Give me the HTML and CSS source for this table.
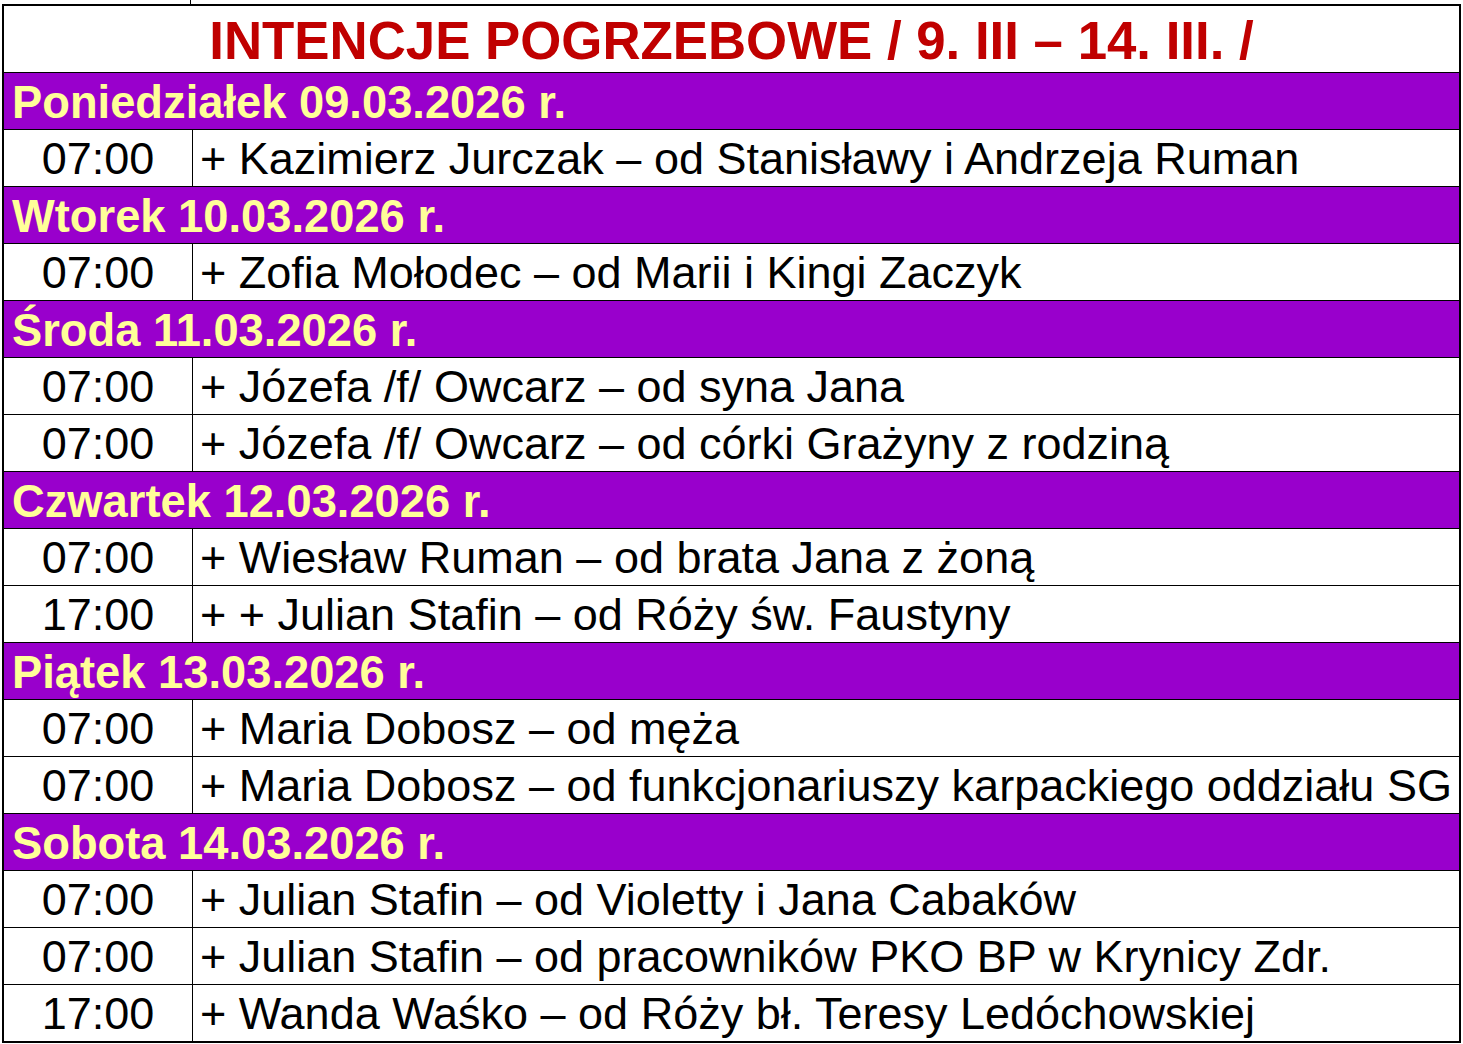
FILE: index.html
```html
<!DOCTYPE html>
<html lang="pl">
<head>
<meta charset="utf-8">
<title>Intencje pogrzebowe</title>
<link rel="stylesheet" href="styles.css">
</head>
<body>
<div class="page">
  <div class="cut-row"><div class="cut-time"></div><div class="cut-text"></div></div>
  <div class="sheet">
    <div class="title">INTENCJE POGRZEBOWE / 9. III – 14. III. /</div>

    <div class="day">Poniedziałek 09.03.2026 r.</div>
    <div class="row"><div class="time">07:00</div><div class="text">+ Kazimierz Jurczak – od Stanisławy i Andrzeja Ruman</div></div>

    <div class="day">Wtorek 10.03.2026 r.</div>
    <div class="row"><div class="time">07:00</div><div class="text">+ Zofia Mołodec – od Marii i Kingi Zaczyk</div></div>

    <div class="day">Środa 11.03.2026 r.</div>
    <div class="row"><div class="time">07:00</div><div class="text">+ Józefa /f/ Owcarz – od syna Jana</div></div>
    <div class="row"><div class="time">07:00</div><div class="text">+ Józefa /f/ Owcarz – od córki Grażyny z rodziną</div></div>

    <div class="day">Czwartek 12.03.2026 r.</div>
    <div class="row"><div class="time">07:00</div><div class="text">+ Wiesław Ruman – od brata Jana z żoną</div></div>
    <div class="row"><div class="time">17:00</div><div class="text">+ + Julian Stafin – od Róży św. Faustyny</div></div>

    <div class="day">Piątek 13.03.2026 r.</div>
    <div class="row"><div class="time">07:00</div><div class="text">+ Maria Dobosz – od męża</div></div>
    <div class="row"><div class="time">07:00</div><div class="text">+ Maria Dobosz – od funkcjonariuszy karpackiego oddziału SG</div></div>

    <div class="day">Sobota 14.03.2026 r.</div>
    <div class="row"><div class="time">07:00</div><div class="text">+ Julian Stafin – od Violetty i Jana Cabaków</div></div>
    <div class="row"><div class="time">07:00</div><div class="text">+ Julian Stafin – od pracowników PKO BP w Krynicy Zdr.</div></div>
    <div class="row last"><div class="time">17:00</div><div class="text">+ Wanda Waśko – od Róży bł. Teresy Ledóchowskiej</div></div>
  </div>
</div>
</body>
</html>
```

FILE: styles.css
```css
html, body {
  margin: 0;
  padding: 0;
  background: #ffffff;
}

body {
  font-family: "Liberation Sans", Arial, sans-serif;
  color: #000000;
}

.page {
  width: 1463px;
  padding-left: 2px;
  box-sizing: border-box;
}

.cut-row {
  display: flex;
  height: 4px;
  margin-left: 2px;
  width: 1457px;
}

.cut-time {
  width: 186px;
  border-right: 1px solid #000;
}

.cut-text {
  flex: 1;
}

.sheet {
  width: 1459px;
  box-sizing: border-box;
  border: 2px solid #000000;
  display: flex;
  flex-direction: column;
}

.title {
  height: 67px;
  box-sizing: border-box;
  border-bottom: 1px solid #000;
  display: flex;
  align-items: center;
  justify-content: center;
  color: #c00000;
  font-weight: bold;
  font-size: 52.8px;
  padding-top: 2px;
}

.day {
  height: 57px;
  box-sizing: border-box;
  border-bottom: 1px solid #000;
  background: #9900cc;
  color: #ffff99;
  font-weight: bold;
  font-size: 45.3px;
  display: flex;
  align-items: center;
  padding-left: 8px;
  padding-top: 4px;
}

.row {
  height: 57px;
  box-sizing: border-box;
  border-bottom: 1px solid #000;
  display: flex;
  font-size: 45px;
}

.row.last {
  border-bottom: none;
  height: 56px;
}

.time {
  width: 189px;
  box-sizing: border-box;
  border-right: 1px solid #000;
  display: flex;
  align-items: center;
  justify-content: center;
  padding-top: 2px;
}

.text {
  flex: 1;
  display: flex;
  align-items: center;
  padding-left: 7px;
  padding-top: 2px;
  white-space: nowrap;
}
```
